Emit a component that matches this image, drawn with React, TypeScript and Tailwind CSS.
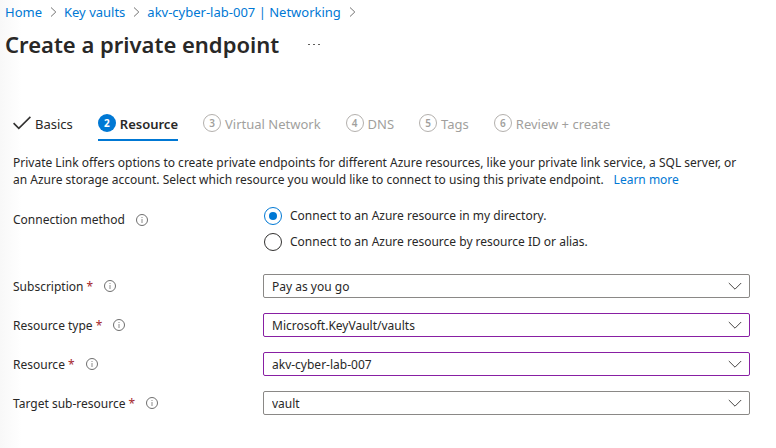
import { Fragment, useState } from "react";
import type { ReactNode } from "react";

const crumbs = ["Home", "Key vaults", "akv-cyber-lab-007 | Networking"];

const steps = ["Basics", "Resource", "Virtual Network", "DNS", "Tags", "Review + create"];

const fields = [
  { id: "subscription", label: "Subscription", value: "Pay as you go", edited: false },
  { id: "resource-type", label: "Resource type", value: "Microsoft.KeyVault/vaults", edited: true },
  { id: "resource", label: "Resource", value: "akv-cyber-lab-007", edited: true },
  { id: "sub-resource", label: "Target sub-resource", value: "vault", edited: false },
];

const methods = [
  "Connect to an Azure resource in my directory.",
  "Connect to an Azure resource by resource ID or alias.",
];

function CrumbChevron() {
  return (
    <svg className="h-3 w-[22px] shrink-0" viewBox="0 0 22 12" fill="none" stroke="#737373" aria-hidden="true">
      <path d="M9 1.5 13.8 6 9 10.5" />
    </svg>
  );
}

function InfoButton({ about }: { about: string }) {
  return (
    <button type="button" aria-label={"About " + about} className="ml-[11px] h-3 w-3 shrink-0">
      <svg className="block h-3 w-3" viewBox="0 0 12 12" fill="none" stroke="#6e6e6e" aria-hidden="true">
        <circle cx="6" cy="6" r="5.5" />
        <path d="M6 5v4M6 3v1" stroke="#8a8a8a" />
      </svg>
    </button>
  );
}

function Step({ index, name }: { index: number; name: string }) {
  const number = index + 1;
  let marker: ReactNode = (
    <span className="flex h-[18px] w-[18px] items-center justify-center rounded-full border border-[#b3b0ad] text-[10px] leading-4 font-semibold text-[#a19f9d]">
      {number}
    </span>
  );
  let look = "border-transparent text-[#a19f9d]";
  if (number === 1) {
    look = "border-transparent text-[#292827]";
    marker = (
      <svg className="h-[18px] w-[18px]" viewBox="0 0 18 18" fill="none" stroke="#323130" strokeWidth="1.6" aria-hidden="true">
        <path d="M.6 9.1 5.8 14.3 17.4 2.9" />
      </svg>
    );
  }
  if (number === 2) {
    look = "border-[#0078d4] font-semibold text-[#292827]";
    marker = (
      <span className="flex h-[18px] w-[18px] items-center justify-center rounded-full bg-[#0078d4] text-[10px] leading-4 font-bold text-white">
        {number}
      </span>
    );
  }
  return (
    <button
      type="button"
      role="tab"
      aria-selected={number === 2}
      className={"flex items-start gap-1 border-b-2 pb-[6px] whitespace-nowrap " + look}
    >
      {marker}
      <span className="pt-px leading-[18px]">{name}</span>
    </button>
  );
}

export default function App() {
  const [method, setMethod] = useState(0);

  return (
    <main className="min-h-screen bg-[linear-gradient(to_right,#f8f8f8,#ffffff_22px)] pr-[26px] font-['Noto_Sans','Open_Sans',sans-serif] text-[12px] leading-[17px] text-[#292827]">
      <nav aria-label="Breadcrumb" className="flex items-center pt-[3px] pl-[5px] text-[13px] text-[#0078d4]">
        {crumbs.map((crumb) => (
          <Fragment key={crumb}>
            <a href="#" className="leading-[18px]">{crumb}</a>
            <CrumbChevron />
          </Fragment>
        ))}
      </nav>

      <header className="flex items-center gap-[27px] pt-[7px] pl-[5px]">
        <h1 className="text-[22px] leading-8 font-semibold">Create a private endpoint</h1>
        <button type="button" aria-label="More actions" className="h-4 w-4">
          <svg className="block h-4 w-4" viewBox="0 0 16 16" fill="#605e5c" aria-hidden="true">
            <path d="M2 8h2v1H2zM7 8h2v1H7zM12 8h2v1h-2z" />
          </svg>
        </button>
      </header>

      <div className="pl-[13px]">
        <div role="tablist" className="flex gap-[25px] pt-[54px] text-[13px]">
          {steps.map((name, index) => (
            <Step key={name} index={index} name={name} />
          ))}
        </div>

        <p className="pt-[13px]">
          Private Link offers options to create private endpoints for different Azure resources, like your private link service, a SQL server, or
          an Azure storage account. Select which resource you would like to connect to using this private endpoint.
          <a href="#" className="ml-[10px] text-[#0078d4]">Learn more</a>
        </p>

        <fieldset className="flex items-start pt-[19px]">
          <div className="flex w-[250px] items-center pt-1">
            <span id="method-label">Connection method</span>
            <InfoButton about="Connection method" />
          </div>
          <div role="radiogroup" aria-labelledby="method-label" className="flex flex-col gap-2 pl-px">
            {methods.map((text, index) => (
              <label key={text} className="flex items-center gap-2 leading-[18px]">
                <input
                  type="radio"
                  name="method"
                  checked={method === index}
                  onChange={() => setMethod(index)}
                  className="h-[18px] w-[18px] appearance-none rounded-full border border-[#323130] p-1 checked:border-[#0078d4] checked:bg-[#0078d4] checked:bg-clip-content"
                />
                {text}
              </label>
            ))}
          </div>
        </fieldset>

        <div className="flex flex-col gap-[15px] pt-[23px]">
          {fields.map((field) => (
            <div key={field.id} className="flex items-center">
              <div className="flex w-[250px] items-center">
                <label htmlFor={field.id}>
                  {field.label} <span className="text-[#a4262c]">*</span>
                </label>
                <InfoButton about={field.label} />
              </div>
              <div className="relative flex-1">
                <select
                  id={field.id}
                  className={
                    "block h-6 w-full appearance-none rounded-xs border bg-white px-2 " +
                    (field.edited ? "border-[#881fa3]" : "border-[#8a8886]")
                  }
                >
                  <option>{field.value}</option>
                </select>
                <svg className="pointer-events-none absolute top-[5px] right-2 h-[14px] w-[14px]" viewBox="0 0 14 14" fill="none" stroke="#484644" aria-hidden="true">
                  <path d="M.8 4 7 10.2 13.2 4" />
                </svg>
              </div>
            </div>
          ))}
        </div>
      </div>
    </main>
  );
}
